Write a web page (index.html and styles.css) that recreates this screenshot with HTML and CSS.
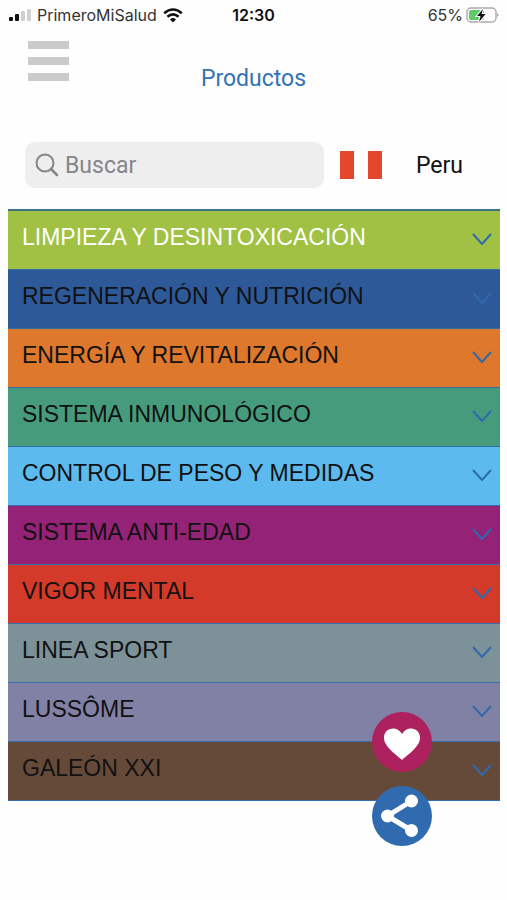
FILE: index.html
```
<!DOCTYPE html>
<html lang="es">
<head>
  <meta charset="UTF-8" />
  <meta name="viewport" content="width=device-width, initial-scale=1.0"/>
  <title>Productos</title>
  <link rel="stylesheet" href="styles.css">
</head>
<body>
  <!-- Barra de estado -->
  <div class="status-bar">
    <div class="status-left">
      <svg class="signal" width="23" height="13" viewBox="0 0 23 13">
        <rect x="1" y="8" width="4" height="4" rx="1" fill="#111"/>
        <rect x="7" y="5" width="4" height="7" rx="1" fill="#111"/>
        <rect x="13" y="2" width="4" height="10" rx="1" fill="#d0d0d0"/>
        <rect x="19" y="0" width="4" height="12" rx="1" fill="#d0d0d0"/>
      </svg>
      <span class="carrier">PrimeroMiSalud</span>
      <svg class="wifi" width="20" height="15" viewBox="0 0 20 15">
        <g fill="none" stroke="#111" stroke-width="2.6">
          <path d="M1.2 5.2 Q10 -2.2 18.8 5.2"/>
          <path d="M4.4 8.8 Q10 4 15.6 8.800"/>
        </g>
        <path d="M7 11.4 Q10 8.8 13 11.4 L10 14.4 Z" fill="#111"/>
      </svg>
    </div>
    <span class="time">12:30</span>
    <div class="status-right">
      <span>65%</span>
      <svg class="battery" width="33" height="17" viewBox="0 0 33 17">
        <rect x="1" y="1" width="29" height="14" rx="4" fill="#fff" stroke="#aaa" stroke-width="1.4"/>
        <path d="M31 6 Q34 8 31 10 Z" fill="#aaa"/>
        <rect x="3" y="3" width="15" height="10" rx="2" fill="#5fca68"/>
        <path d="M17 2 L11 9 H14.5 L13 15 L19.500 7 H15.500 Z" fill="#111" stroke="#fff" stroke-width="2" paint-order="stroke"/>
      </svg>
    </div>
  </div>

  <header class="header">
    <button class="menu-button" aria-label="Menú"><span></span><span></span><span></span></button>
    <h1 class="title">Productos</h1>
  </header>

  <!-- Buscador y país -->
  <div class="toolbar">
    <label class="search-box">
      <svg width="24" height="24" viewBox="0 0 24 24" fill="none" stroke="#85858a" stroke-linecap="round">
        <circle cx="10" cy="10" r="8.5" stroke-width="2"/>
        <path d="M16 16 L22 22" stroke-width="2.6"/>
      </svg>
      <input type="text" placeholder="Buscar" aria-label="Buscar" />
    </label>
    <button class="country">
      <span class="flag"></span>
      <span>Peru</span>
    </button>
  </div>

  <main class="categories">
    <button class="category limpieza">LIMPIEZA Y DESINTOXICACIÓN <svg class="chevron" viewBox="0 0 20 12"><path d="M1 1 L10 11 L19 1"/></svg></button>
    <button class="category regeneracion">REGENERACIÓN Y NUTRICIÓN <svg class="chevron" viewBox="0 0 20 12"><path d="M1 1 L10 11 L19 1"/></svg></button>
    <button class="category energia">ENERGÍA Y REVITALIZACIÓN <svg class="chevron" viewBox="0 0 20 12"><path d="M1 1 L10 11 L19 1"/></svg></button>
    <button class="category inmunologico">SISTEMA INMUNOLÓGICO <svg class="chevron" viewBox="0 0 20 12"><path d="M1 1 L10 11 L19 1"/></svg></button>
    <button class="category peso">CONTROL DE PESO Y MEDIDAS <svg class="chevron" viewBox="0 0 20 12"><path d="M1 1 L10 11 L19 1"/></svg></button>
    <button class="category antiedad">SISTEMA ANTI-EDAD <svg class="chevron" viewBox="0 0 20 12"><path d="M1 1 L10 11 L19 1"/></svg></button>
    <button class="category vigor">VIGOR MENTAL <svg class="chevron" viewBox="0 0 20 12"><path d="M1 1 L10 11 L19 1"/></svg></button>
    <button class="category sport">LINEA SPORT <svg class="chevron" viewBox="0 0 20 12"><path d="M1 1 L10 11 L19 1"/></svg></button>
    <button class="category lussome">LUSSÔME <svg class="chevron" viewBox="0 0 20 12"><path d="M1 1 L10 11 L19 1"/></svg></button>
    <button class="category galeon">GALEÓN XXI <svg class="chevron" viewBox="0 0 20 12"><path d="M1 1 L10 11 L19 1"/></svg></button>
  </main>

  <!-- Botones flotantes -->
  <div class="floating">
    <button class="round-button favorite" aria-label="Favoritos">
      <svg width="60" height="60" viewBox="0 0 60 60">
        <path d="M30 48 C25 43 12 35 12 26 C12 20 16 16.5 21 16.5 C25 16.5 28 18.5 30 22 C32 18.5 35 16.5 39 16.5 C44 16.5 48 20 48 26 C48 35 35 43 30 48 Z" fill="#fff"/>
      </svg>
    </button>
    <button class="round-button share" aria-label="Compartir">
      <svg width="60" height="60" viewBox="0 0 60 60" fill="#fff">
        <path d="M39.5 15 L15.5 30 L39.5 44.5" fill="none" stroke="#fff" stroke-width="5"/>
        <circle cx="39.5" cy="15" r="6.5"/>
        <circle cx="15.5" cy="30" r="6.5"/>
        <circle cx="39.5" cy="44.5" r="6.5"/>
      </svg>
    </button>
  </div>
</body>
</html>
```
FILE: styles.css
```
* {
  box-sizing: border-box;
}
body {
  font-family: Roboto, sans-serif;
  margin: 0;
  background: #fefefe;
  color: #111;
}
button {
  border: 0;
  padding: 0;
  background: none;
  color: inherit;
  font: inherit;
  cursor: pointer;
}
svg {
  display: block;
  flex-shrink: 0;
}
.status-bar {
  display: grid;
  grid-template-columns: 1fr auto 1fr;
  align-items: center;
  height: 30px;
  padding: 0 8px;
  font-family: Inter, sans-serif;
  font-size: 16px;
  color: #333;
}
.status-left,
.status-right {
  display: flex;
  align-items: center;
  gap: 6px;
}
.status-right {
  justify-content: flex-end;
  gap: 3px;
}
.time {
  font-weight: 600;
  color: #111;
}
.header {
  display: grid;
  grid-template-columns: 1fr auto 1fr;
  align-items: start;
  padding: 11px 28px 0;
}
.menu-button {
  display: flex;
  flex-direction: column;
  gap: 8px;
  width: 41px;
}
.menu-button span {
  height: 8px;
  background: #cbcbcb;
}
.title {
  margin: 24px 0 0;
  font-size: 23px;
  font-weight: 400;
  line-height: 28px;
  color: #3273b5;
}
.toolbar {
  display: flex;
  align-items: center;
  gap: 16px;
  padding: 49px 44px 0 25px;
}
.search-box {
  display: flex;
  flex: 1;
  align-items: center;
  gap: 6px;
  height: 46px;
  min-width: 0;
  padding: 0 10px;
  border-radius: 10px;
  background: #eee;
}
.search-box input {
  width: 100%;
  min-width: 0;
  padding: 0;
  border: 0;
  outline: 0;
  background: none;
  font-family: Roboto, sans-serif;
  font-size: 23px;
}
.search-box input::placeholder {
  color: #85858a;
}
.country {
  display: flex;
  align-items: center;
  gap: 34px;
  font-size: 23px;
}
.flag {
  width: 42px;
  height: 28px;
  background: linear-gradient(to right, #e4472b 33%, #fff 33%, #fff 67%, #e4472b 67%);
}
.categories {
  margin: 21px 7px 0 8px;
  border-top: 2px solid #3b7580;
}
.category {
  display: flex;
  align-items: center;
  justify-content: space-between;
  width: 100%;
  height: 59px;
  padding: 0 8px 6px 14px;
  border-bottom: 1px solid #356cac;
  font-family: "Liberation Sans", Arial, sans-serif;
  font-size: 23px;
  text-align: left;
}
.chevron {
  width: 20px;
  height: 12px;
  margin-top: 4px;
  fill: none;
  stroke: #3069ad;
  stroke-width: 2;
}
.limpieza {
  background: #a0c143;
  color: #fff;
}
.regeneracion {
  background: #2d5998;
}
.energia {
  background: #de782d;
}
.inmunologico {
  background: #469b7d;
}
.peso {
  background: #5dbaee;
}
.antiedad {
  background: #942377;
}
.vigor {
  background: #d43a29;
}
.sport {
  background: #7d9198;
}
.lussome {
  background: #8180a5;
}
.galeon {
  background: #664a39;
}
.floating {
  position: fixed;
  right: 75px;
  bottom: 54px;
  display: flex;
  flex-direction: column;
  gap: 14px;
}
.round-button {
  width: 60px;
  height: 60px;
  border-radius: 50%;
}
.favorite {
  background: #ad225e;
}
.share {
  background: #306baf;
}
```
